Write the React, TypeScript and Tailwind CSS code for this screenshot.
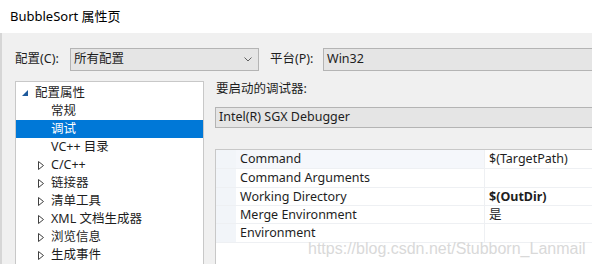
import { ReactNode } from 'react'

const font = { fontFamily: '"Noto Sans", "Noto Sans CJK SC", sans-serif' }

const treeItems = [
  { label: '配置属性', level: 0, open: true },
  { label: '常规', level: 1 },
  { label: '调试', level: 1, selected: true },
  { label: 'VC++ 目录', level: 1 },
  { label: 'C/C++', level: 1, folder: true },
  { label: '链接器', level: 1, folder: true },
  { label: '清单工具', level: 1, folder: true },
  { label: 'XML 文档生成器', level: 1, folder: true },
  { label: '浏览信息', level: 1, folder: true },
  { label: '生成事件', level: 1, folder: true },
]

const props = [
  { name: 'Command', value: '$(TargetPath)', h: 'h-[19px]', hl: true },
  { name: 'Command Arguments', value: '', h: 'h-[19px]' },
  { name: 'Working Directory', value: '$(OutDir)', h: 'h-[18px]', bold: true },
  { name: 'Merge Environment', value: '是', h: 'h-[18px]' },
  { name: 'Environment', value: '', h: 'h-[19px]' },
]

function Chevron() {
  return (
    <svg width="8" height="5" viewBox="0 0 8 5" className="shrink-0">
      <path d="M0.5 0.5 L4 4 L7.5 0.5" fill="none" stroke="#606060" strokeWidth="1" />
    </svg>
  )
}

function OpenArrow() {
  return (
    <svg width="6" height="6" viewBox="0 0 6 6" className="shrink-0">
      <polygon points="0,6 6,6 6,0" fill="#1e5a9c" />
    </svg>
  )
}

function ClosedArrow() {
  return (
    <svg width="6" height="9" viewBox="0 0 6 9" className="shrink-0">
      <polygon points="0.5,0.5 5.5,4.5 0.5,8.5" fill="none" stroke="#404040" strokeWidth="1" />
    </svg>
  )
}

function Box({ className, children }: { className: string; children: ReactNode }) {
  return (
    <div className={`flex items-center border border-[#b4b4b4] bg-[#e5e5e5] pl-[3px] ${className}`}>
      {children}
    </div>
  )
}

export default function App() {
  return (
    <div style={font} className="relative w-[592px] h-[264px] overflow-hidden flex flex-col text-[12.5px] text-[#1e1e1e] bg-white">
      {/* title bar */}
      <div className="h-[33px] shrink-0 flex items-center pl-[10px] text-[13px] text-black bg-white">
        BubbleSort 属性页
      </div>

      <div className="flex-1 flex flex-col bg-[#f0f0f0] border-l-2 border-[#d6d6d6] pl-[13px]">
        {/* configuration row */}
        <div className="mt-[15px] h-[23px] flex items-center">
          <span className="w-[55px]">配置(C):</span>
          <Box className="w-[189px] h-[23px] justify-between pr-[6px]">
            <span>所有配置</span>
            <Chevron />
          </Box>
          <span className="ml-[11px] w-[53px]">平台(P):</span>
          <Box className="flex-1 h-[23px] border-r-0">
            <span>Win32</span>
          </Box>
        </div>

        {/* main */}
        <div className="mt-[10px] flex flex-1 min-h-0">
          <div className="w-[189px] border border-[#c8c8c8] border-b-0 bg-white pt-[2px]">
            {treeItems.map(it => (
              <div
                key={it.label}
                className={`h-[18px] flex items-center ${it.selected ? 'bg-[#0078d7] text-white' : ''}`}
              >
                {it.level === 0 ? (
                  <div className="flex items-center pl-[6px] gap-[7px]">
                    <OpenArrow />
                    <span>{it.label}</span>
                  </div>
                ) : (
                  <div className="flex items-center pl-[22px]">
                    <span className="w-[13px] flex items-center">{it.folder && <ClosedArrow />}</span>
                    <span>{it.label}</span>
                  </div>
                )}
              </div>
            ))}
          </div>

          <div className="flex-1 ml-[11px] flex flex-col">
            <div className="h-[16px] flex items-center pl-[1px]">要启动的调试器:</div>
            <Box className="mt-[10px] h-[21px] border-r-0">
              <span>Intel(R) SGX Debugger</span>
            </Box>

            <div className="mt-[21px] border-l border-t border-[#c8c8c8] bg-white flex-1">
              {props.map(p => (
                <div key={p.name} className={`${p.h} flex border-b border-[#eef0f3]`}>
                  <div className="w-[20px] bg-[#f2f5f9]" />
                  <div className={`w-[248px] pl-[4px] pt-[1px] flex items-center ${p.hl ? 'bg-[#f5f7fb]' : ''}`}>
                    {p.name}
                  </div>
                  <div className={`flex-1 border-l border-[#eef0f3] pl-[4px] pt-[1px] flex items-center ${p.bold ? 'font-bold' : ''}`}>
                    {p.value}
                  </div>
                </div>
              ))}
            </div>
          </div>
        </div>
      </div>

      {/* watermark */}
      <div
        className="absolute left-[308px] top-[237px] text-[16px] text-[#d9d9d9] pointer-events-none"
        style={{ fontFamily: '"Liberation Sans", Arial, sans-serif' }}
      >
        https://blog.csdn.net/Stubborn_Lanmail
      </div>
    </div>
  )
}
